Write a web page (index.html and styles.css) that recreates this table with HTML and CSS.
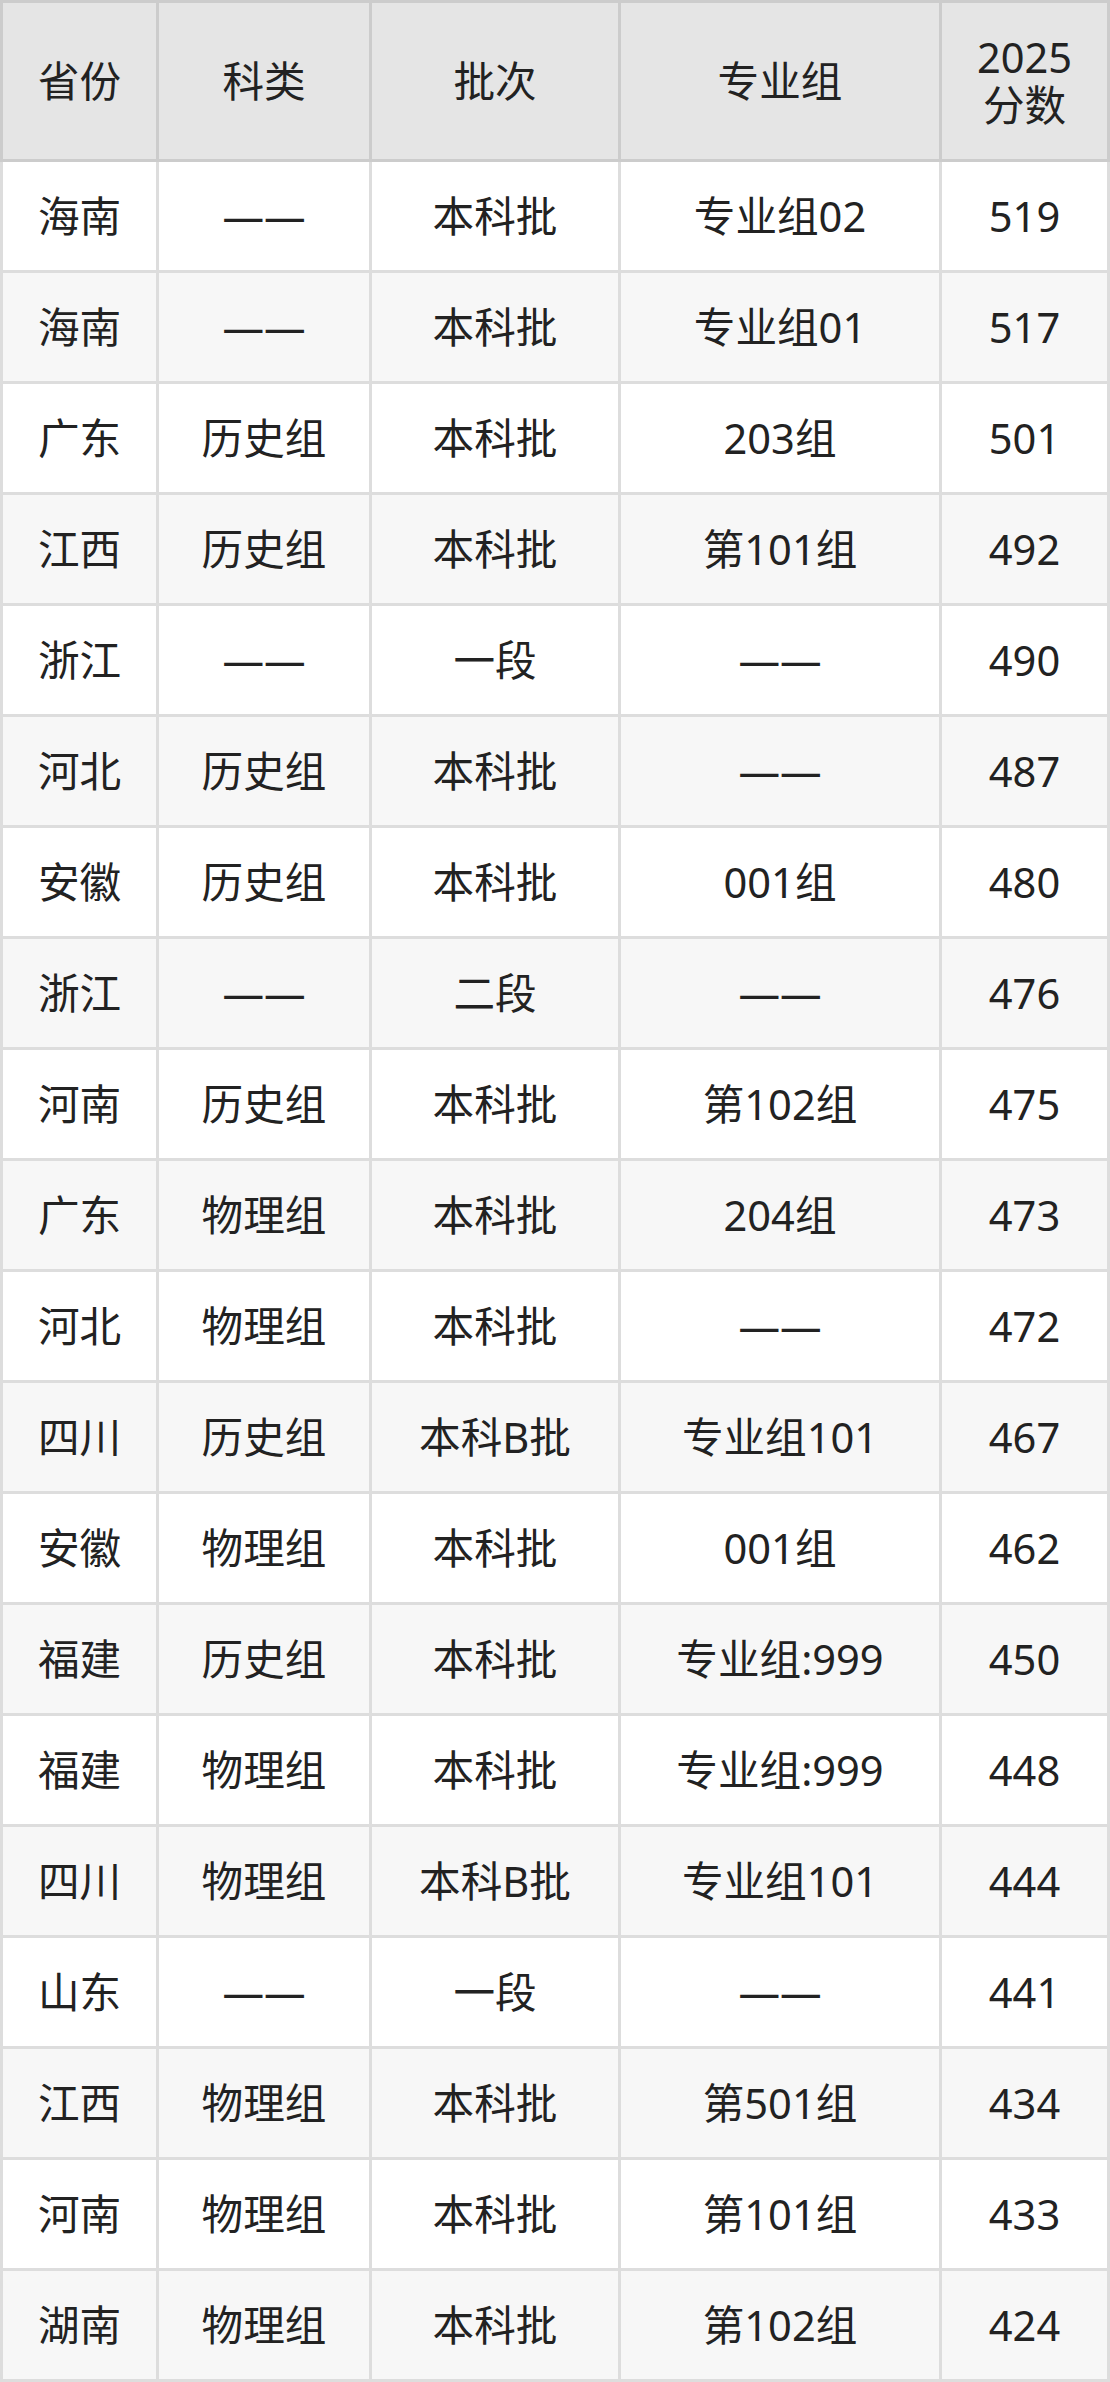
FILE: index.html
```html
<!DOCTYPE html>
<html lang="zh-CN">
<head>
<meta charset="utf-8">
<title>2025分数</title>
<link rel="stylesheet" href="styles.css">
</head>
<body>
<table class="scores">
  <colgroup>
    <col class="c-prov">
    <col class="c-type">
    <col class="c-batch">
    <col class="c-group">
    <col class="c-score">
  </colgroup>
  <thead>
    <tr><th>省份</th><th>科类</th><th>批次</th><th>专业组</th><th>2025<br>分数</th></tr>
  </thead>
  <tbody>
    <tr><td>海南</td><td>——</td><td>本科批</td><td>专业组02</td><td>519</td></tr>
    <tr><td>海南</td><td>——</td><td>本科批</td><td>专业组01</td><td>517</td></tr>
    <tr><td>广东</td><td>历史组</td><td>本科批</td><td>203组</td><td>501</td></tr>
    <tr><td>江西</td><td>历史组</td><td>本科批</td><td>第101组</td><td>492</td></tr>
    <tr><td>浙江</td><td>——</td><td>一段</td><td>——</td><td>490</td></tr>
    <tr><td>河北</td><td>历史组</td><td>本科批</td><td>——</td><td>487</td></tr>
    <tr><td>安徽</td><td>历史组</td><td>本科批</td><td>001组</td><td>480</td></tr>
    <tr><td>浙江</td><td>——</td><td>二段</td><td>——</td><td>476</td></tr>
    <tr><td>河南</td><td>历史组</td><td>本科批</td><td>第102组</td><td>475</td></tr>
    <tr><td>广东</td><td>物理组</td><td>本科批</td><td>204组</td><td>473</td></tr>
    <tr><td>河北</td><td>物理组</td><td>本科批</td><td>——</td><td>472</td></tr>
    <tr><td>四川</td><td>历史组</td><td>本科B批</td><td>专业组101</td><td>467</td></tr>
    <tr><td>安徽</td><td>物理组</td><td>本科批</td><td>001组</td><td>462</td></tr>
    <tr><td>福建</td><td>历史组</td><td>本科批</td><td>专业组:999</td><td>450</td></tr>
    <tr><td>福建</td><td>物理组</td><td>本科批</td><td>专业组:999</td><td>448</td></tr>
    <tr><td>四川</td><td>物理组</td><td>本科B批</td><td>专业组101</td><td>444</td></tr>
    <tr><td>山东</td><td>——</td><td>一段</td><td>——</td><td>441</td></tr>
    <tr><td>江西</td><td>物理组</td><td>本科批</td><td>第501组</td><td>434</td></tr>
    <tr><td>河南</td><td>物理组</td><td>本科批</td><td>第101组</td><td>433</td></tr>
    <tr><td>湖南</td><td>物理组</td><td>本科批</td><td>第102组</td><td>424</td></tr>
  </tbody>
</table>
</body>
</html>
```
FILE: styles.css
```css
html, body {
  margin: 0;
  padding: 0;
  background: #ffffff;
}

body {
  font-family: "Noto Sans", "Noto Sans CJK SC", sans-serif;
  font-size: 41.6px;
  line-height: 48px;
  color: #222222;
}

.scores {
  width: 1110px;
  table-layout: fixed;
  border-collapse: separate;
  border-spacing: 0;
}

.c-prov { width: 159px; }
.c-type { width: 213px; }
.c-batch { width: 249px; }
.c-group { width: 321px; }
.c-score { width: 168px; }

.scores th,
.scores td {
  box-sizing: border-box;
  padding: 0;
  text-align: center;
  vertical-align: middle;
  font-weight: normal;
  white-space: nowrap;
}

.scores th {
  height: 162px;
  background: #e5e5e5;
  border-top: 3px solid #cccccc;
  border-right: 3px solid #cccccc;
  border-bottom: 3px solid #cccccc;
}

.scores th:first-child {
  border-left: 3px solid #cccccc;
}

.scores td {
  height: 111px;
  border-right: 3px solid #dddddd;
  border-bottom: 3px solid #dddddd;
}

.scores td:first-child {
  border-left: 3px solid #dddddd;
}

.scores tbody tr:nth-child(even) td {
  background: #f7f7f7;
}
```
